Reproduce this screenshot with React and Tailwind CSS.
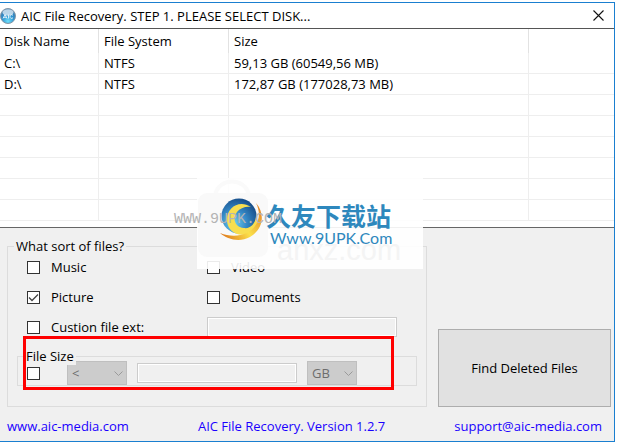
import { useState } from "react";

const DISKS = [
  { name: "C:\\", fs: "NTFS", size: "59,13 GB (60549,56 MB)" },
  { name: "D:\\", fs: "NTFS", size: "172,87 GB (177028,73 MB)" },
];

const EMPTY_ROWS = 6;

function AppIcon() {
  return (
    <svg width="16" height="16" viewBox="0 0 16 16" aria-hidden="true">
      <defs>
        <radialGradient id="app-ball" cx="0.5" cy="0.85" r="0.8">
          <stop offset="0" stopColor="#6fe0fb" />
          <stop offset="0.5" stopColor="#2f93d0" />
          <stop offset="1" stopColor="#3a78ad" />
        </radialGradient>
      </defs>
      <circle cx="8" cy="8" r="7.5" fill="url(#app-ball)" stroke="#8597a6" />
      <ellipse cx="8" cy="4.5" rx="5.5" ry="3.2" fill="#dceaf4" opacity="0.8" />
      <path d="M3 10.5 5 6.5l2 4M3.8 9.3h2.400M8.500 6.500v4M13 7.300c-1.600-1.300-3-.5-3 1.200s1.400 2.500 3 1.300" fill="none" stroke="#e8f4fb" strokeWidth="0.9" />
    </svg>
  );
}

function Check({ label, ...props }) {
  return (
    <label className="flex h-6 items-center gap-[11px]">
      <span className="grid size-[13px] shrink-0">
        <input type="checkbox" className="peer col-start-1 row-start-1 size-[13px] appearance-none border border-[#333] bg-white" {...props} />
        <svg viewBox="0 0 13 13" className="pointer-events-none invisible col-start-1 row-start-1 size-[13px] peer-checked:visible" aria-hidden="true">
          <path d="M2 6.500 5 9.500 11 3.500" fill="none" stroke="#444" strokeWidth="1.300" />
        </svg>
      </span>
      {label}
    </label>
  );
}

function DisabledSelect({ label, value, className }) {
  return (
    <div className={`grid h-6 ${className}`}>
      <select disabled aria-label={label} className="col-start-1 row-start-1 w-full appearance-none border border-[#bfbfbf] bg-[#ccc] pl-1 text-[#6d6d6d] opacity-100">
        <option>{value}</option>
      </select>
      <svg width="9" height="5" viewBox="0 0 9 5" className="pointer-events-none col-start-1 row-start-1 mr-1 self-center justify-self-end" aria-hidden="true">
        <path d="M.5.5l4 4 4-4" fill="none" stroke="#9a9a9a" />
      </svg>
    </div>
  );
}

function Watermark() {
  return (
    <div className="pointer-events-none absolute top-[178px] left-[197px] h-[91px] w-[226px] bg-white/90 select-none">
      <svg width="226" height="91" viewBox="0 0 226 91" className="absolute inset-0" aria-hidden="true">
        <path d="M18 17c4-18 30-18 34 0" fill="none" stroke="#fafafa" strokeWidth="4" />
        <rect x="1" y="15" width="70" height="64" rx="9" fill="#f9f9f9" />
      </svg>
      <span className="absolute top-[58px] left-[80px] font-['Liberation_Sans'] text-[29px] leading-7 text-[#f4f4f4]">anxz.com</span>
      <svg width="48" height="48" viewBox="0 0 48 48" className="absolute top-[19px] left-[22px]" aria-hidden="true">
        <defs>
          <radialGradient id="wm-ball" cx="0.35" cy="0.7" r="0.75">
            <stop offset="0" stopColor="#6fd0f2" />
            <stop offset="0.5" stopColor="#3488c6" />
            <stop offset="1" stopColor="#174b86" />
          </radialGradient>
          <linearGradient id="wm-swoosh" x1="0" y1="0.8" x2="1" y2="0.2">
            <stop offset="0" stopColor="#e07c1c" />
            <stop offset="0.5" stopColor="#fbe04a" />
            <stop offset="1" stopColor="#e58a2a" />
          </linearGradient>
        </defs>
        <circle cx="20" cy="19" r="17.500" fill="url(#wm-ball)" />
        <path d="M32 10C20 2 7 11 8 24c1 11 12 17 22 12 7-3 10-10 7-16-1 7-6 12-12 11-9-1-12-9-7-16 3-4 9-6 14-5z" fill="#f8de50" />
        <path d="M37 6c9 10 8 26-6 34C20 46 8 42 1 36c13 5 28 3 35-7 5-7 5-15 1-23z" fill="url(#wm-swoosh)" />
      </svg>
      <span className="absolute top-[23px] left-[69px] font-['Noto_Sans_CJK_SC',sans-serif] text-[25px] leading-7 font-bold whitespace-nowrap text-[#2e88bd]">久友下载站</span>
      <span className="absolute top-[50px] left-[73px] font-['Lato',sans-serif] text-[16px] leading-5 text-[#2e88bd]">Www.9UPK.Com</span>
      <span className="absolute top-[32px] left-[-23px] font-['Liberation_Mono',monospace] text-[15px] leading-5 text-[#b4b4b4]">WWW.9UPK.COM</span>
    </div>
  );
}

export default function App() {
  const [kinds, setKinds] = useState({ music: false, video: false, picture: true, documents: false, custom: false, size: false });
  const bind = (key) => ({
    checked: kinds[key],
    onChange: (e) => setKinds((k) => ({ ...k, [key]: e.target.checked })),
  });

  return (
    <div className="bg-white pt-[2px] pr-[5px] font-['Open_Sans',sans-serif] text-[13px] leading-[18px] text-black">
      <main className="border-y border-r border-[#1a7fd0]">
        <header className="flex h-[26px] items-center gap-[5px] border-b border-[#555] pr-[10px]">
          <AppIcon />
          <h1 className="flex-1">AIC File Recovery. STEP 1. PLEASE SELECT DISK...</h1>
          <button type="button" aria-label="Close">
            <svg width="11" height="11" viewBox="0 0 11 11" aria-hidden="true">
              <path d="M.5.5l10 10M10.500.5l-10 10" stroke="#111" strokeWidth="1.100" />
            </svg>
          </button>
        </header>

        <div className="border-b border-[#666] bg-white pb-[6px]">
          <table className="w-full table-fixed border-separate border-spacing-0 text-left">
            <colgroup>
              <col className="w-[99px]" />
              <col className="w-[130px]" />
              <col className="w-[300px]" />
              <col />
            </colgroup>
            <thead>
              <tr className="h-6">
                <th className="border-r border-[#e2e2e2] p-0 pl-1 font-normal">Disk Name</th>
                <th className="border-r border-[#e2e2e2] p-0 pl-[5px] font-normal">File System</th>
                <th className="border-r border-[#e2e2e2] p-0 pl-[5px] font-normal">Size</th>
                <th className="p-0" />
              </tr>
            </thead>
            <tbody>
              {DISKS.map((d) => (
                <tr key={d.name} className="h-[21px]">
                  <td className="border-r border-b border-[#eee] p-0 pl-1">{d.name}</td>
                  <td className="border-r border-b border-[#eee] p-0 pl-[5px]">{d.fs}</td>
                  <td className="border-r border-b border-[#eee] p-0 pl-[5px]">{d.size}</td>
                  <td className="border-b border-[#eee] p-0" />
                </tr>
              ))}
              {Array.from({ length: EMPTY_ROWS }, (_, i) => (
                <tr key={i} className="h-[21px]">
                  <td className="border-r border-b border-[#eee] p-0" />
                  <td className="border-r border-b border-[#eee] p-0" />
                  <td className="border-r border-b border-[#eee] p-0" />
                  <td className="border-b border-[#eee] p-0" />
                </tr>
              ))}
            </tbody>
          </table>
        </div>

        <section className="bg-[#f0f0f0] pt-[9px]">
          <div className="grid grid-cols-[minmax(0,420px)_minmax(0,1fr)] gap-[11px] pr-[3px] pl-[7px]">
            <fieldset className="border border-[#dcdcdc] pb-5">
              <legend className="ml-[6px] px-[2px]">What sort of files?</legend>
              <div className="grid grid-cols-[180px_190px] gap-y-[6px] pl-[19px]">
                <Check label="Music" {...bind("music")} />
                <Check label="Video" {...bind("video")} />
                <Check label="Picture" {...bind("picture")} />
                <Check label="Documents" {...bind("documents")} />
                <Check label="Custion file ext:" {...bind("custom")} />
                <input type="text" disabled aria-label="Custom file extension" className="h-5 self-center border border-[#ccc] bg-[#f0f0f0] px-1 inset-ring inset-ring-white" />
              </div>
              <fieldset className="mx-[9px] mt-2 border border-[#dcdcdc]">
                <legend className="relative z-10 ml-2 bg-[#f0f0f0] pr-[2px]">File Size</legend>
                <div className="-mt-1 flex items-center pl-[9px]">
                  <Check aria-label="Limit by file size" {...bind("size")} />
                  <DisabledSelect label="Comparison" value="<" className="ml-[27px] w-[60px]" />
                  <input type="text" disabled aria-label="File size" className="ml-[10px] h-5 w-[160px] border border-[#ccc] bg-[#f0f0f0] px-1 inset-ring inset-ring-white" />
                  <DisabledSelect label="Unit" value="GB" className="ml-[10px] w-[50px]" />
                </div>
              </fieldset>
            </fieldset>
            <button type="button" className="h-[78px] self-end border border-[#adadad] bg-[#e1e1e1]">
              Find Deleted Files
            </button>
          </div>

          <footer className="flex justify-between pt-[10px] pr-3 pb-[6px] pl-[7px] text-[#1a00ff]">
            <a href="http://www.aic-media.com">www.aic-media.com</a>
            <span>AIC File Recovery. Version 1.2.7</span>
            <a href="mailto:support@aic-media.com">support@aic-media.com</a>
          </footer>
        </section>
      </main>

      <div className="pointer-events-none absolute top-[336px] left-[23px] h-[54px] w-[371px] border-3 border-[#f00]" />
      <Watermark />
    </div>
  );
}
